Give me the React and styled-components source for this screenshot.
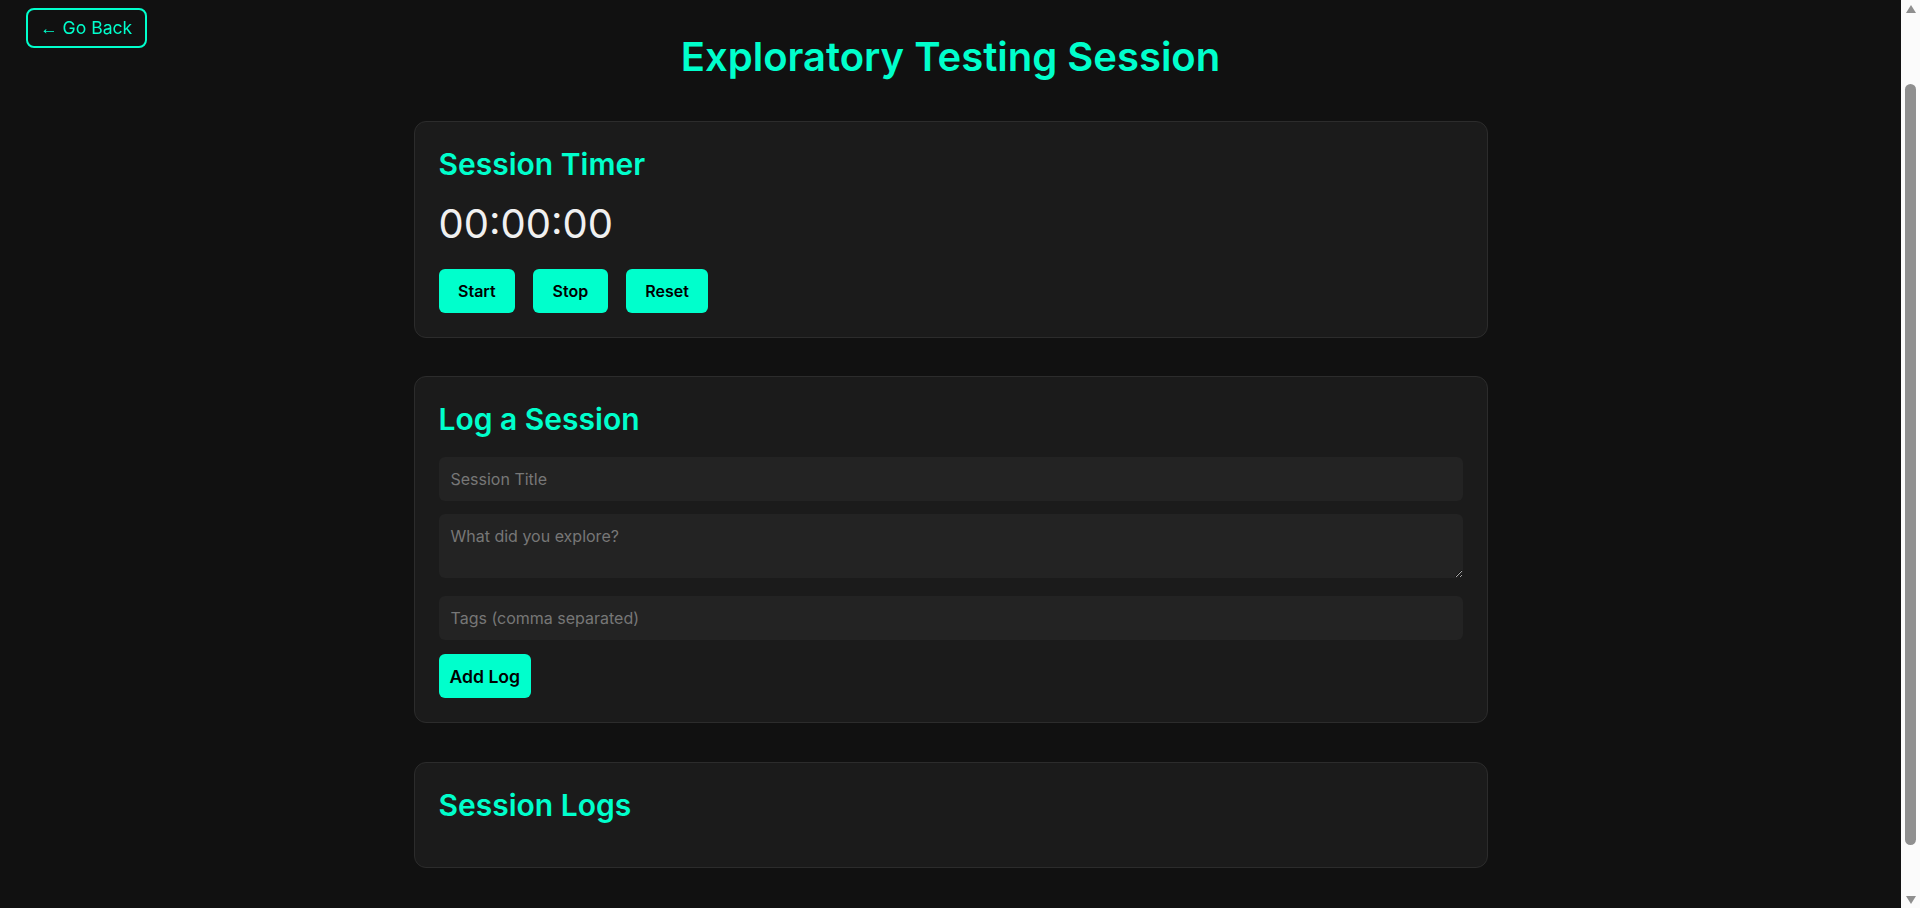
import React, { useLayoutEffect, useRef, useState } from "react";
import styled, { createGlobalStyle } from "styled-components";

const TEAL = "#00ffcc";
const BAR_W = 19;
const BTN_H = 17;

const GlobalStyle = createGlobalStyle`
  html, body {
    margin: 0;
    padding: 0;
    height: 100%;
    overflow: hidden;
    background: #111111;
    font-family: Inter, "Noto Sans", "Liberation Sans", sans-serif;
    color: #eeeeee;
  }
  * { box-sizing: border-box; }
`;

const Frame = styled.div`
  display: flex;
  height: 100vh;
`;

const Scroller = styled.div`
  flex: 1;
  min-width: 0;
  height: 100vh;
  overflow-y: scroll;
  background: #111111;
  scrollbar-width: none;
  &::-webkit-scrollbar { display: none; }
`;

const ScrollStrip = styled.div`
  width: ${BAR_W}px;
  flex: 0 0 ${BAR_W}px;
  height: 100vh;
  background: #fbfbfb;
  display: flex;
  flex-direction: column;
`;

const ArrowCell = styled.div`
  height: ${BTN_H}px;
  flex: 0 0 ${BTN_H}px;
  display: flex;
  align-items: center;
  justify-content: center;
`;

const Triangle = styled.span`
  width: 0;
  height: 0;
  border-left: 5.5px solid transparent;
  border-right: 5.5px solid transparent;
  ${(p) =>
    p.$down
      ? "border-top: 8px solid #8f8f8f;"
      : "border-bottom: 8px solid #8f8f8f;"}
`;

const Track = styled.div`
  flex: 1;
  display: flex;
  flex-direction: column;
  align-items: center;
`;

const Thumb = styled.div`
  width: 11px;
  background: #8f8f8f;
  border-radius: 6px;
`;

const BackButton = styled.button`
  position: fixed;
  top: 8px;
  left: 26px;
  z-index: 10;
  background: transparent;
  border: 2px solid ${TEAL};
  border-radius: 8px;
  color: ${TEAL};
  font-family: inherit;
  font-size: 17.6px;
  line-height: 21px;
  padding: 7px 13px 7px 12px;
  cursor: pointer;
`;

const BackArrow = styled.span`
  font-family: "Liberation Sans", Arial, sans-serif;
`;

const Page = styled.main`
  display: flex;
  flex-direction: column;
  align-items: center;
  gap: 38.5px;
  padding: 113px 0 95px;
`;

const Title = styled.h1`
  margin: 0 0 1px;
  font-size: 40px;
  font-weight: 600;
  line-height: 48.4px;
  color: ${TEAL};
`;

const Card = styled.section`
  width: 1074px;
  background: #1b1b1b;
  border: 1px solid #2c2c2c;
  border-radius: 12px;
  padding: 24px;
`;

const CardTitle = styled.h2`
  margin: 0 0 20px;
  font-size: 30px;
  font-weight: 600;
  line-height: 36px;
  color: ${TEAL};
`;

const Timer = styled.div`
  font-size: 40px;
  font-weight: 400;
  line-height: 44px;
  color: #f0f0f0;
  margin-bottom: 22.6px;
`;

const ButtonRow = styled.div`
  display: flex;
  gap: 18px;
`;

const ActionButton = styled.button`
  background: ${TEAL};
  color: #000000;
  border: none;
  border-radius: 6px;
  padding: ${(p) => (p.$wide ? "11.5px 11px" : "12px 19.5px")};
  font-family: inherit;
  font-size: ${(p) => (p.$wide ? "17.6px" : "16px")};
  font-weight: 600;
  line-height: ${(p) => (p.$wide ? "21px" : "20px")};
  cursor: pointer;
`;

const fieldBase = `
  display: block;
  width: 100%;
  background: #232323;
  border: none;
  border-radius: 6px;
  padding: 12px;
  color: #eeeeee;
  font-family: Inter, "Noto Sans", "Liberation Sans", sans-serif;
  font-size: 16px;
  line-height: 20px;
  outline: none;
  &::placeholder { color: #777777; }
`;

const TextInput = styled.input`
  ${fieldBase}
  margin-bottom: ${(p) => p.$mb || 0}px;
`;

const TextArea = styled.textarea`
  ${fieldBase}
  height: 64px;
  resize: vertical;
  margin-bottom: 18px;
`;

const LogList = styled.div``;

export default function App() {
  const [logs] = useState([]);
  const scrollRef = useRef(null);
  const [thumb, setThumb] = useState({ top: 67, height: 760 });

  const measure = () => {
    const el = scrollRef.current;
    if (!el) return;
    const track = el.clientHeight - BTN_H * 2;
    const height = (track * el.clientHeight) / el.scrollHeight;
    const top = (track * el.scrollTop) / el.scrollHeight;
    setThumb({ top, height });
  };

  useLayoutEffect(() => {
    if (scrollRef.current) scrollRef.current.scrollTop = 80;
    measure();
  }, []);

  return (
    <>
      <GlobalStyle />
      <BackButton>
        <BackArrow>←</BackArrow> Go Back
      </BackButton>
      <Frame>
        <Scroller ref={scrollRef} onScroll={measure}>
          <Page>
            <Title>Exploratory Testing Session</Title>

            <Card>
              <CardTitle>Session Timer</CardTitle>
              <Timer>00:00:00</Timer>
              <ButtonRow>
                <ActionButton>Start</ActionButton>
                <ActionButton>Stop</ActionButton>
                <ActionButton>Reset</ActionButton>
              </ButtonRow>
            </Card>

            <Card>
              <CardTitle>Log a Session</CardTitle>
              <TextInput placeholder="Session Title" $mb={13} />
              <TextArea placeholder="What did you explore?" rows={2} />
              <TextInput placeholder="Tags (comma separated)" $mb={14} />
              <ActionButton $wide>Add Log</ActionButton>
            </Card>

            <Card>
              <CardTitle>Session Logs</CardTitle>
              <LogList>
                {logs.map((l, i) => (
                  <div key={i}>{l.title}</div>
                ))}
              </LogList>
            </Card>
          </Page>
        </Scroller>
        <ScrollStrip>
          <ArrowCell>
            <Triangle />
          </ArrowCell>
          <Track>
            <Thumb style={{ marginTop: thumb.top, height: thumb.height }} />
          </Track>
          <ArrowCell>
            <Triangle $down />
          </ArrowCell>
        </ScrollStrip>
      </Frame>
    </>
  );
}
